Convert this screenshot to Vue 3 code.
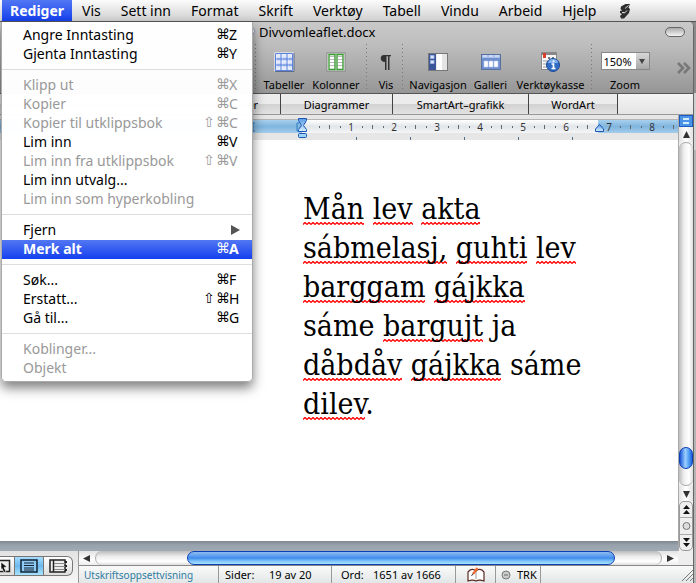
<script setup>
import { ref } from 'vue'

const menus = ['Rediger', 'Vis', 'Sett inn', 'Format', 'Skrift', 'Verktøy', 'Tabell', 'Vindu', 'Arbeid', 'Hjelp']

const groups = [
  [
    { label: 'Angre Inntasting', cmd: '⌘', key: 'Z' },
    { label: 'Gjenta Inntasting', cmd: '⌘', key: 'Y' }
  ],
  [
    { label: 'Klipp ut', cmd: '⌘', key: 'X', off: true },
    { label: 'Kopier', cmd: '⌘', key: 'C', off: true },
    { label: 'Kopier til utklippsbok', shift: '⇧', cmd: '⌘', key: 'C', off: true },
    { label: 'Lim inn', cmd: '⌘', key: 'V' },
    { label: 'Lim inn fra utklippsbok', shift: '⇧', cmd: '⌘', key: 'V', off: true },
    { label: 'Lim inn utvalg...' },
    { label: 'Lim inn som hyperkobling', off: true }
  ],
  [
    { label: 'Fjern', sub: true },
    { label: 'Merk alt', cmd: '⌘', key: 'A', active: true }
  ],
  [
    { label: 'Søk...', cmd: '⌘', key: 'F' },
    { label: 'Erstatt...', shift: '⇧', cmd: '⌘', key: 'H' },
    { label: 'Gå til...', cmd: '⌘', key: 'G' }
  ],
  [
    { label: 'Koblinger...', off: true },
    { label: 'Objekt', off: true }
  ]
]

const lines = [
  [['Mån', 1], ['lev', 1], ['akta', 1]],
  [['sábmelasj,', 1], ['guhti', 1], ['lev', 1]],
  [['barggam', 1], ['gájkka', 1]],
  [['sáme', 0], ['bargujt', 1], ['ja', 0]],
  [['dåbdåv', 1], ['gájkka', 1], ['sáme', 0]],
  [['dilev', 1, '.']]
]

const zoom = ref('150%')
</script>

<template>
  <div class="screen">
    <nav class="menubar">
      <button v-for="(m, i) in menus" :key="m" :class="{ open: i === 0 }">{{ m }}</button>
      <button class="script" aria-label="Skript">
        <svg width="14" height="18" viewBox="0 0 14 18">
          <path d="M7.500 2H12l-1.500 3.500L12 7l-1 4-5 5.500H3L2 14l2-2-2-1V9l2-.5L2.500 7 3 4.500z" fill="#2e2e2e" />
          <path d="M10.500 3.500L7 6.500M4 10.500h2.500M9 8.500l-3 3" stroke="#ddd" fill="none" />
        </svg>
      </button>
    </nav>

    <div class="window">
      <header class="title">
        <svg width="10" height="14" viewBox="0 0 10 14"><path d="M1 1h4l4 5-4 7H1z" fill="#f4f6fa" stroke="#8c9bb5" /></svg>
        <span>Divvomleaflet.docx</span>
        <button class="pill" aria-label="Verktøylinje"></button>
      </header>

      <div class="toolbar">
        <i class="sep"></i>
        <button class="tool w52">
          <svg width="22" height="22" viewBox="0 0 22 22">
            <rect x="2" y="2" width="18" height="18" fill="#e6ecfb" stroke="#fff" />
            <path d="M2 20.500h19V2" fill="none" stroke="#5d6b8c" />
            <path d="M4 8h5M10 8h5M16 8h4M4 14h5M10 14h5M16 14h4" stroke="#b9cbf4" stroke-width="3" />
            <path d="M2.500 2.500h17v17h-17zM8 2v18M14 2v18M2 8h18M2 14h18" fill="none" stroke="#5c84dc" />
          </svg>
          <span>Tabeller</span>
        </button>
        <button class="tool w52">
          <svg width="22" height="22" viewBox="0 0 22 22">
            <rect x="2" y="2" width="18" height="18" fill="#fff" stroke="#858585" />
            <path d="M5 5.500h5M5 8.500h5M5 11.500h5M5 14.500h5M13 5.500h5M13 8.500h5M13 11.500h5M13 14.500h5" stroke="#bbb" />
            <path d="M4 3.500h6v15H4zM12 3.500h6v15h-6z" fill="none" stroke="#3c9a36" stroke-width="1.400" />
          </svg>
          <span>Kolonner</span>
        </button>
        <i class="sep wide"></i>
        <button class="tool w30">
          <svg width="22" height="22" viewBox="0 0 22 22">
            <path d="M16 4H9C4.500 4 4.500 11 10 11v8h1.500V5.200h1.500V19h1.500V5.200H16z" fill="#333" />
          </svg>
          <span>Vis</span>
        </button>
        <i class="sep"></i>
        <button class="tool w66">
          <svg width="22" height="22" viewBox="0 0 22 22">
            <rect x="1.500" y="2.500" width="19" height="17" fill="#eee" stroke="#777" />
            <rect x="2" y="3" width="7" height="16" fill="#3b5699" />
            <path d="M3.500 4.500h3.500v3h-3.500zM3.500 9.500h3.500v3h-3.500z" fill="#dfe8fa" stroke="#9ab0e0" />
            <path d="M10 3h10v16H10z" fill="#e4e4e4" /><path d="M10 3h5v16h-5z" fill="#fff" />
          </svg>
          <span>Navigasjon</span>
        </button>
        <button class="tool w39">
          <svg width="22" height="22" viewBox="0 0 22 22">
            <rect x="1.500" y="3.500" width="19" height="15" fill="#6f8fcf" stroke="#57709f" />
            <path d="M2 4h18v3H2z" fill="#a8bfea" /><path d="M3 5h4M9 5h4M15 5h4" stroke="#eef3ff" />
            <path d="M4 10h4v6H4zM9 10h4v6H9zM14 10h4v6h-4z" fill="#fff" stroke="#b8cbf1" stroke-width=".6" />
          </svg>
          <span>Galleri</span>
        </button>
        <button class="tool w81">
          <svg width="22" height="22" viewBox="0 0 22 22">
            <rect x="1.500" y="1.500" width="15" height="17" fill="#f8f8f8" stroke="#888" />
            <path d="M2 2h14v2H2z" fill="#888" /><path d="M3 2h3v5H3z" fill="#d6402d" />
            <path d="M8 6h2v2H8zM12 6h2v2h-2z" fill="#777" />
            <path d="M3 10h6M3 13h4M3 16h4" stroke="#999" />
            <circle cx="13" cy="14" r="6.500" fill="#2f6cc4" stroke="#1d4a94" />
            <path d="M8 12a5 4 0 0 1 10 0z" fill="#7fb0ee" />
            <path d="M13.500 9.500v1.800M11.500 13h2v4.500M11.500 17.500h4" stroke="#fff" stroke-width="1.700" fill="none" />
          </svg>
          <span>Verktøykasse</span>
        </button>
        <i class="sep"></i>
        <label class="tool w62 zoom">
          <span class="combo">
            <select v-model="zoom"><option>150%</option></select>
            <i></i>
          </span>
          <span>Zoom</span>
        </label>
        <button class="more" aria-label="Flere">
          <svg width="14" height="12" viewBox="0 0 14 12"><path d="M1 1l5 5-5 5M7 1l5 5-5 5" fill="none" stroke="#777" stroke-width="2.500" /></svg>
        </button>
      </div>

      <div class="tabs">
        <button class="t0">er</button>
        <button class="t1">Diagrammer</button>
        <button class="t2">SmartArt–grafikk</button>
        <button class="t3">WordArt</button>
      </div>

      <div class="main">
        <div class="left">
          <svg class="ruler" height="25">
            <defs>
              <linearGradient id="rb" x2="0" y2="1"><stop offset="0" stop-color="#a9d0ee" /><stop offset=".5" stop-color="#7fb5de" /><stop offset="1" stop-color="#a5cdea" /></linearGradient>
              <linearGradient id="rw" x2="0" y2="1"><stop offset="0" stop-color="#fff" /><stop offset=".5" stop-color="#e2e6ea" /><stop offset="1" stop-color="#f4f5f6" /></linearGradient>
              <linearGradient id="mk" x2="0" y2="1"><stop offset="0" stop-color="#5a9be6" /><stop offset="1" stop-color="#d8f0ff" /></linearGradient>
            </defs>
            <rect width="100%" height="25" fill="#e6e6e6" />
            <rect y="4" width="100%" height="1" fill="#b5b5b5" />
            <rect y="5" width="100%" height="13" fill="url(#rb)" />
            <rect x="302" y="5" width="296" height="13" fill="url(#rw)" />
            <g v-for="n in 9" :key="n">
              <text v-if="n < 9" :x="308 + n * 43" y="16">{{ n }}</text>
              <rect :x="276 + n * 43" y="11" width="1" height="2" fill="#666" />
              <rect :x="286 + n * 43" y="10" width="1" height="4" fill="#666" />
              <rect v-if="n < 9" :x="297 + n * 43" y="11" width="1" height="2" fill="#666" />
            </g>
            <rect v-for="n in 5" :key="'t' + n" :x="302 + n * 54" y="22" width="1" height="3" fill="#526a86" />
            <path d="M255 8h-2v8h2M299 8h-2v8h2" fill="none" stroke="#2d7fc4" />
            <path d="M298.500 3.500h8v2l-3 5 3 4v2h-8v-2l3-4-3-5z" fill="url(#mk)" stroke="#1c56b4" />
            <rect x="298.500" y="18.500" width="8" height="4" rx="1" fill="#9fd4fa" stroke="#1c56b4" />
            <path d="M599.500 9.500l4 4.500v2.500h-8V14z" fill="url(#mk)" stroke="#1c56b4" />
          </svg>
          <article class="page">
            <p v-for="(l, i) in lines" :key="i">
              <template v-for="(w, j) in l" :key="j"><span :class="{ bad: w[1] }">{{ w[0] }}</span>{{ w[2] || ' ' }}</template>
            </p>
          </article>
          <div class="edge"></div>
        </div>

        <div class="vscroll">
          <div class="split"><i></i><i></i></div>
          <button class="arrow" aria-label="Opp"><svg width="9" height="8"><path d="M4.500 0L8 7H1z" fill="#333" /></svg></button>
          <div class="vtrack"><div class="above"></div><div class="vthumb"></div><div class="below"></div></div>
          <button class="arrow" aria-label="Ned"><svg width="9" height="8"><path d="M4.500 8L8 1H1z" fill="#333" /></svg></button>
          <div class="browse">
            <button aria-label="Forrige side"><svg width="9" height="10"><path d="M4.500 0L8 4H1zM4.500 5L8 9H1z" fill="#111" /></svg></button>
            <button aria-label="Velg objekt"><svg width="9" height="10"><circle cx="4.500" cy="5" r="3.500" fill="#ddd" stroke="#777" /></svg></button>
            <button aria-label="Neste side"><svg width="9" height="10"><path d="M4.500 5L8 1H1zM4.500 10L8 6H1z" fill="#111" /></svg></button>
          </div>
        </div>
      </div>

      <footer class="bottom">
        <div class="views">
          <button class="v0" aria-label="Nettoppsett">
            <svg width="15" height="16" viewBox="0 0 15 16"><path d="M0 2.500h9.500v11H0" fill="#eee" stroke="#222" stroke-width="1.500" /><path d="M1 4l6 5-3 .5 2 4-2 1-2-4-1 2z" fill="#111" stroke="#fff" stroke-width=".6" /></svg>
          </button>
          <button class="v1" aria-label="Utskriftsoppsett">
            <svg width="18" height="14" viewBox="0 0 18 14"><path d="M1 1h16v12H1z" fill="#8ecbf4" stroke="#123" stroke-width="1.500" /><path d="M4 4h10M4 6.500h10M4 9h10M4 11h10" stroke="#123" /></svg>
          </button>
          <button class="v2" aria-label="Notatblokk">
            <svg width="18" height="14" viewBox="0 0 18 14"><path d="M1 1h15v12H1zM4.500 1v12" fill="#eee" stroke="#222" stroke-width="1.500" /><path d="M5 4.500h11M5 7.500h11M5 10.500h11" stroke="#888" /><path d="M17 2v2M17 6v2M17 10v2" stroke="#222" stroke-width="2" /></svg>
          </button>
        </div>
        <div class="right">
          <div class="hscroll">
            <button aria-label="Venstre"><svg width="8" height="9"><path d="M0 4.500L7 1v7z" fill="#333" /></svg></button>
            <div class="htrack"><div class="hb"></div><div class="hthumb"></div><div class="ha"></div></div>
            <button aria-label="Høyre"><svg width="8" height="9"><path d="M8 4.500L1 1v7z" fill="#333" /></svg></button>
            <div class="corner"></div>
          </div>
          <div class="status">
            <span class="s0">Utskriftsoppsettvisning</span>
            <span class="s1"><b>Sider:</b>19 av 20</span>
            <span class="s2"><b>Ord:</b>1651 av 1666</span>
            <span class="s3">
              <svg width="18" height="15" viewBox="0 0 18 15"><path d="M1 5l2-2c2-1 4-1 6 1 2-2 4-2 6-1l2 2v9c-3-1-6-1-8 0-2-1-5-1-8 0z" fill="#fff" stroke="#5a2a20" stroke-width="1.200" /><path d="M9 5v7" stroke="#999" /><path d="M10.500 1L6 7" stroke="#ee6a2c" stroke-width="2.200" /><path d="M6 6.500L4.500 9" stroke="#444" /></svg>
            </span>
            <span class="s4">
              <svg width="10" height="10"><circle cx="5" cy="5" r="4" fill="#ccc" stroke="#777" /><path d="M3 5h4" stroke="#666" stroke-width="1" /></svg>TRK
            </span>
            <span class="s5"><svg width="12" height="12"><path d="M1 12L12 1M5 12l7-7M9 12l3-3" stroke="#777" /></svg></span>
          </div>
        </div>
      </footer>
    </div>

    <div class="dropdown">
      <div v-for="(g, i) in groups" :key="i" class="group">
        <button v-for="it in g" :key="it.label" class="item" :class="{ active: it.active }" :disabled="it.off">
          <span class="lab">{{ it.label }}</span>
          <span v-if="it.key" class="mod">{{ it.shift }}</span>
          <span v-if="it.key" class="mod">{{ it.cmd }}</span>
          <span v-if="it.key" class="key">{{ it.key }}</span>
          <svg v-if="it.sub" width="9" height="10"><path d="M0 0l9 5-9 5z" fill="#555" /></svg>
        </button>
      </div>
    </div>
  </div>
</template>

<style>
body { margin: 0; background: #fff; }
</style>

<style scoped>
* { box-sizing: border-box; }
.screen { position: relative; min-height: 100vh; display: flex; flex-direction: column; font-family: "Noto Sans", "DejaVu Sans", sans-serif; font-size: 14px; color: #000; overflow: hidden; background: linear-gradient(#8a8a8a 0 93px, #d0d0d0 93px 150px, #b4b4b4 150px); }
button { font: inherit; color: inherit; border: 0; padding: 0; margin: 0; background: none; }
svg { display: block; flex: none; }

.menubar { display: flex; height: 22px; padding-left: 2px; background: linear-gradient(#fcfcfc, #cfcfcf); border-bottom: 1px solid #555; }
.menubar button { padding: 0 10px; line-height: 21px; white-space: nowrap; }
.menubar .open { padding: 0 8px; background: linear-gradient(#5277f3, #1540ee); color: #fff; font-weight: bold; }
.menubar .script { padding: 1px 12px; }

.window { flex: 1; display: flex; flex-direction: column; margin-right: 2px; border-right: 1px solid #666; border-top-right-radius: 5px; overflow: hidden; background: #ececec; }
.title { display: flex; align-items: center; height: 22px; padding: 0 8px 2px 246px; gap: 3px; background: linear-gradient(#c9c9c9, #bebebe); font-size: 13px; }
.pill { margin-left: auto; width: 20px; height: 10px; border: 1px solid #666; border-radius: 5px; background: linear-gradient(#aaa, #f4f4f4); }

.toolbar { display: flex; height: 50px; padding-left: 255px; background: linear-gradient(#bebebe, #969696); border-bottom: 1px solid #555; font-size: 11px; }
.sep { flex: none; width: 3px; margin-bottom: 4px; background: repeating-linear-gradient(#777 0 1px, transparent 1px 4px) 0 0 / 1px 100% no-repeat; }
.sep.wide { width: 8px; background-position: 4px 0; }
.tool { display: flex; flex-direction: column; align-items: center; gap: 4px; padding-top: 7px; flex: none; line-height: 16px; white-space: nowrap; }
.w52 { width: 52px; }
.w30 { width: 32px; }
.w66 { width: 66px; }
.w62 { width: 62px; }
.w39 { width: 39px; }
.w81 { width: 81px; }
.zoom { padding-top: 8px; gap: 7px; }
.combo { display: flex; height: 18px; width: 49px; border: 1px solid #888; background: #fff; }
.combo select { appearance: none; border: 0; padding: 0 0 0 2px; margin: 0; width: 34px; background: #fff; font: 11px "Noto Sans", sans-serif; color: #000; }
.combo i { flex: 1; display: grid; place-items: center; background: linear-gradient(#d8d8d8, #a8a8a8); }
.combo i::after { content: ""; border: 3px solid transparent; border-top: 5px solid #444; border-bottom: 0; }
.more { margin-left: auto; padding: 0 2px 2px 0; }

.tabs { display: flex; height: 21px; background: linear-gradient(#f4f4f4, #e4e4e4); font-size: 11px; border-bottom: 1px solid #999; }
.tabs button { border-right: 1px solid #444; background: linear-gradient(#ececec 0 50%, #d2d2d2 50%, #e2e2e2); white-space: nowrap; }
.t0 { width: 281px; text-align: right; }
.tabs .t0 { padding-right: 22px; }
.t1 { width: 112px; }
.t2 { width: 136px; }
.t3 { width: 89px; }

.main { flex: 1; display: flex; }
.left { flex: 1; min-width: 0; display: flex; flex-direction: column; }
.ruler { width: 100%; }
.ruler text { font-size: 10px; text-anchor: middle; fill: #333; }
.page { flex: 1; background: #fff; padding: 49px 60px 40px 303px; font-family: "DejaVu Serif Condensed", "DejaVu Serif", serif; font-stretch: condensed; font-size: 30px; }
.page p { margin: 0; line-height: 39px; white-space: nowrap; }
.bad { padding-bottom: 1px; background: url("data:image/svg+xml,%3Csvg xmlns='http://www.w3.org/2000/svg' width='4' height='3'%3E%3Cpath d='M0 2.500L2 .5L4 2.500' fill='none' stroke='red' stroke-width='1.300'/%3E%3C/svg%3E") 0 31px repeat-x; }
.edge { height: 10px; background: linear-gradient(#7f8790, #98a2ad 40%, #a0aab5); }

.vscroll { width: 15px; display: flex; flex-direction: column; background: #eee; border-left: 1px solid #aaa; }
.split { height: 12px; display: flex; flex-direction: column; justify-content: space-around; padding: 1px 3px; background: #4a93e6; border: 1px solid #1c5cc0; }
.split i { height: 2px; background: #d2ecff; }
.arrow { height: 15px; display: grid; place-items: center; background: linear-gradient(90deg, #e2e2e2, #fff, #e2e2e2); }
.vtrack { flex: 1; display: flex; flex-direction: column; border-radius: 7px; border: solid #aaa; border-width: 1px 0; background: linear-gradient(90deg, #bbb, #eee 35%, #fff 70%, #ddd); }
.above { flex: 305; }
.vthumb { height: 22px; border-radius: 7px; border: 1px solid #0c3fb4; background: linear-gradient(90deg, #1b55d6, #9bd0ff 45%, #4d9cf2 75%, #1f60dc); }
.below { flex: 16; }
.browse { height: 50px; display: flex; flex-direction: column; background: #eee; border: 1px solid #999; border-radius: 5px; }
.browse button { flex: 1; display: grid; place-items: center; }
.browse button + button { border-top: 1px solid #aaa; }

.bottom { display: flex; height: 32px; background: #ebebeb; }
.views { flex: none; width: 79px; padding: 5px 5px 7px 0; display: flex; border-right: 1px solid #999; background: linear-gradient(#e2e2e2, #f6f6f6); }
.views button { display: grid; place-items: center; border: solid #777; border-width: 1px 1px 1px 0; background: linear-gradient(#fff, #ddd); }
.v0 { width: 15px; }
.v1 { width: 29px; }
.v2 { width: 30px; }
.views .v1 { background: linear-gradient(#a6dcff, #6cb9ef 50%, #a9e4ff); }
.views .v2 { border-radius: 0 6px 6px 0; }
.right { flex: 1; min-width: 0; }
.hscroll { display: flex; height: 14px; background: linear-gradient(#e2e2e2, #fff 60%, #eee); }
.hscroll button { width: 16px; display: grid; place-items: center; }
.htrack { flex: 1; display: flex; border-radius: 7px; border: solid #aaa; border-width: 0 1px; background: linear-gradient(#bbb, #eee 40%, #fff 75%, #ddd); }
.hb { flex: 92; }
.hthumb { flex: 429; border: 1px solid #0c3fb4; border-radius: 7px; background: linear-gradient(#8ebcf0, #5a9df0 35%, #3f8cec 50%, #7fc4fb 75%, #a6e4ff); }
.ha { flex: 46; }
.corner { width: 15px; background: #eee; }
.status { display: flex; height: 18px; border-top: 1px solid #888; background: linear-gradient(#fafafa, #e2e6e7); font-size: 11px; line-height: 16px; }
.status span { flex: none; display: flex; align-items: center; border-right: 1px solid #999; white-space: nowrap; }
.status b { font-weight: normal; }
.s0 { width: 140px; padding-left: 5px; color: #2f7ca0; font-size: 10px; }
.s1 { width: 113px; padding-left: 6px; }
.s1 b { width: 44px; }
.s2 { width: 124px; padding-left: 9px; }
.s2 b { width: 32px; }
.s3 { width: 40px; padding-left: 11px; }
.s4 { width: 45px; padding-left: 5px; gap: 6px; }
.status .s5 { flex: 1; justify-content: flex-end; border: 0; }

.dropdown { position: absolute; left: 1px; top: 22px; width: 252px; padding: 4px 0 3px; background: rgba(255, 255, 255, .98); border: solid #aaa; border-width: 0 1px 1px; border-radius: 0 0 5px 5px; box-shadow: 0 6px 12px rgba(0, 0, 0, .5); }
.group + .group { margin-top: 5px; border-top: 1px solid #ddd; padding-top: 6px; }
.item { display: flex; align-items: center; width: 100%; height: 19px; padding: 0 12px 2px 21px; line-height: 17px; text-align: left; }
.item:disabled { color: #999; }
.item.active { background: linear-gradient(#5277f3, #1540ee); color: #fff; font-weight: bold; }
.lab { flex: 1; white-space: nowrap; }
.mod { width: 13px; font-family: "DejaVu Sans", sans-serif; font-weight: normal; }
.key { width: 11px; }
</style>
